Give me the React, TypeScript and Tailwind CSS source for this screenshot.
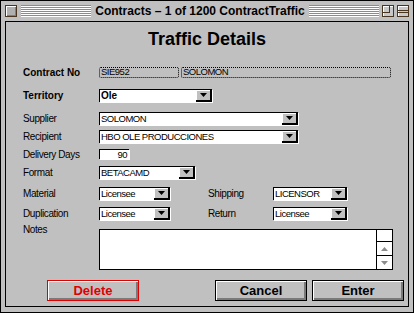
import { type JSX } from "react";

const FONT = "font-['Liberation_Sans',Arial,sans-serif]";
const VALUE = "text-[9.5px] tracking-[-0.5px]";

function Arrow({ color = "#000" }: { color?: string }): JSX.Element {
	return (
		<svg width="7" height="4" viewBox="0 0 7 4">
			<path d="M0 0h7L3.5 4z" fill={color} />
		</svg>
	);
}

function Dropdown({ value, width, bold = false }: { value: string; width: string; bold?: boolean }): JSX.Element {
	return (
		<div className={`flex h-[13px] ${width} border-t border-l border-black bg-white shadow-[1px_1px_0_#fff]`}>
			<span
				className={`flex-1 overflow-hidden whitespace-nowrap pl-px leading-[12px] ${
					bold ? "text-[10px] font-bold" : VALUE
				}`}
			>
				{value}
			</span>
			<span className="flex w-[16px] items-center justify-center border-r-2 border-b-2 border-black bg-[#c0c0c0] shadow-[inset_1px_1px_0_#fff]">
				<Arrow />
			</span>
		</div>
	);
}

function Row({ label, bold = false, children, className = "" }: { label: string; bold?: boolean; children: React.ReactNode; className?: string }): JSX.Element {
	return (
		<div className={`flex h-[12px] items-center ${className}`}>
			<span className={`w-[76px] text-[10px] ${bold ? "font-bold" : "tracking-[-0.4px]"}`}>{label}</span>
			{children}
		</div>
	);
}

function TitleStripes(): JSX.Element {
	return (
		<div className="flex flex-1 flex-col">
			{[0, 1, 2, 3, 4, 5].map((i) => (
				<div key={i}>
					<div className="h-px bg-[#8c8c8c]" />
					<div className="h-px bg-white" />
				</div>
			))}
		</div>
	);
}

function Button({ text }: { text: string }): JSX.Element {
	return (
		<button className="h-[21px] w-[92px] border border-black bg-[#c0c0c0] text-[13px] font-bold leading-none shadow-[inset_1px_1px_0_#fff,inset_-2px_-2px_0_#7a7a7a]">
			{text}
		</button>
	);
}

export default function App(): JSX.Element {
	return (
		<div className={`h-[313px] w-[414px] border border-black bg-[#c0c0c0] text-black ${FONT}`}>
			{/* Barra de título */}
			<div className="flex h-[20px] items-center pl-[4px] pr-[4px]">
				<div className="mr-[4px] h-[12px] w-[12px] border border-[#4a3520] bg-[#b0b0b0] shadow-[inset_1px_1px_0_#fff,inset_-1px_-1px_0_#808080]" />
				<TitleStripes />
				<span className="px-[4px] text-[12px] font-bold leading-none">Contracts – 1 of 1200 ContractTraffic</span>
				<TitleStripes />
				<div className="ml-[3px] flex h-[12px] w-[12px] items-start border border-[#4a3520] bg-[#c8c8c8] shadow-[inset_1px_1px_0_#fff]">
					<div className="h-[7px] w-[7px] border-r border-b border-[#4a3520]" />
				</div>
				<div className="ml-[3px] flex h-[12px] w-[12px] flex-col justify-center border border-[#4a3520] bg-[#c8c8c8] shadow-[inset_1px_1px_0_#fff]">
					<div className="h-[3px] border-t border-b border-[#4a3520]" />
				</div>
			</div>

			{/* Panel */}
			<div className="mx-[4px] flex h-[286px] flex-col border border-black">
				<h1 className="h-[34px] pt-[8px] text-center text-[18px] font-bold leading-[18px]">Traffic Details</h1>

				<div className="flex flex-col pl-[17px]">
					<Row label="Contract No" bold className="mt-[10px]">
						<div className={`flex h-[11px] w-[80px] items-center rounded-[2px] border border-dotted border-black pl-px ${VALUE}`}>
							SIE952
						</div>
						<div className={`ml-[2px] flex h-[11px] w-[210px] items-center rounded-[2px] border border-dotted border-black pl-px ${VALUE}`}>
							SOLOMON
						</div>
					</Row>
					<Row label="Territory" bold className="mt-[11px]">
						<Dropdown value="Ole" width="w-[113px]" bold />
					</Row>
					<Row label="Supplier" className="mt-[11px]">
						<Dropdown value="SOLOMON" width="w-[199px]" />
					</Row>
					<Row label="Recipient" className="mt-[6px]">
						<Dropdown value="HBO OLE PRODUCCIONES" width="w-[199px]" />
					</Row>
					<Row label="Delivery Days" className="mt-[6px]">
						<div className={`h-[10px] w-[30px] border-t border-l border-black bg-white pr-[2px] text-right leading-[9px] shadow-[1px_1px_0_#fff] ${VALUE}`}>
							90
						</div>
					</Row>
					<Row label="Format" className="mt-[6px]">
						<Dropdown value="BETACAMD" width="w-[96px]" />
					</Row>
					<Row label="Material" className="mt-[9px]">
						<Dropdown value="Licensee" width="w-[71px]" />
						<span className="ml-[38px] w-[65px] text-[10px] tracking-[-0.4px]">Shipping</span>
						<Dropdown value="LICENSOR" width="w-[74px]" />
					</Row>
					<Row label="Duplication" className="mt-[8px]">
						<Dropdown value="Licensee" width="w-[71px]" />
						<span className="ml-[38px] w-[65px] text-[10px] tracking-[-0.4px]">Return</span>
						<Dropdown value="Licensee" width="w-[74px]" />
					</Row>
					<div className="mt-[10px] flex">
						<span className="-mt-[7px] w-[76px] text-[10px] tracking-[-0.4px]">Notes</span>
						<div className="flex h-[41px] w-[294px] border border-black bg-white">
							<div className="flex-1" />
							<div className="flex w-[16px] flex-col justify-end border-l border-black">
								<div className="flex h-[14px] items-center justify-center border-t border-black">
									<svg width="7" height="4" viewBox="0 0 7 4">
										<path d="M3.5 0L7 4H0z" fill="#8c8c8c" />
									</svg>
								</div>
								<div className="flex h-[14px] items-center justify-center border-t border-black">
									<Arrow color="#8c8c8c" />
								</div>
							</div>
						</div>
					</div>
				</div>

				{/* Botones */}
				<div className="mt-[10px] flex pl-[41px] pr-[4px]">
					<button className="h-[21px] w-[92px] border border-[#e00000] bg-[#c0c0c0] text-[13px] font-bold leading-none text-[#e00000] shadow-[inset_1px_1px_0_#fff,inset_-2px_-2px_0_#7a7a7a]">
						Delete
					</button>
					<div className="ml-auto flex gap-[5px]">
						<Button text="Cancel" />
						<Button text="Enter" />
					</div>
				</div>
			</div>
		</div>
	);
}
